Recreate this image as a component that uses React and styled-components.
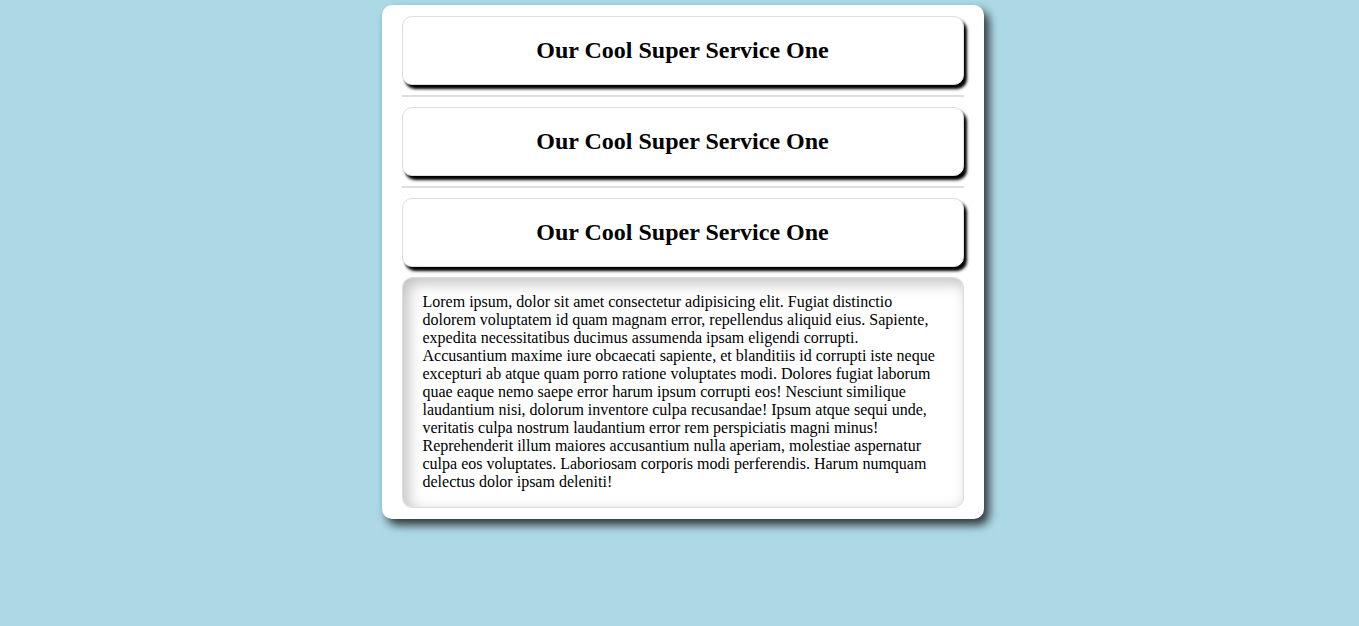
import React from "react";
import styled, { createGlobalStyle } from "styled-components";

const GlobalStyle = createGlobalStyle`
  body {
    margin: 0;
    background: #add8e6;
    font-family: "Liberation Serif", "Times New Roman", serif;
  }
`;

const lorem =
  "Lorem ipsum, dolor sit amet consectetur adipisicing elit. Fugiat distinctio dolorem voluptatem id quam magnam error, repellendus aliquid eius. Sapiente, expedita necessitatibus ducimus assumenda ipsam eligendi corrupti. Accusantium maxime iure obcaecati sapiente, et blanditiis id corrupti iste neque excepturi ab atque quam porro ratione voluptates modi. Dolores fugiat laborum quae eaque nemo saepe error harum ipsum corrupti eos! Nesciunt similique laudantium nisi, dolorum inventore culpa recusandae! Ipsum atque sequi unde, veritatis culpa nostrum laudantium error rem perspiciatis magni minus! Reprehenderit illum maiores accusantium nulla aperiam, molestiae aspernatur culpa eos voluptates. Laboriosam corporis modi perferendis. Harum numquam delectus dolor ipsam deleniti!";

const services = [
  { id: 1, title: "Our Cool Super Service One", open: false },
  { id: 2, title: "Our Cool Super Service One", open: false },
  { id: 3, title: "Our Cool Super Service One", open: true },
];

const App = () => {
  return (
    <Page>
      <GlobalStyle />
      <Accordion>
        {services.map((s) => (
          <Item key={s.id} open={s.open}>
            <Header>
              <Title>{s.title}</Title>
            </Header>
            {s.open && <Content>{lorem}</Content>}
          </Item>
        ))}
      </Accordion>
    </Page>
  );
};

export default App;

const Page = styled.div`
  display: flex;
  justify-content: center;
  padding: 5px 0 0 6px;
  min-height: 100vh;
  box-sizing: border-box;
`;

const Accordion = styled.div`
  width: 602px;
  box-sizing: border-box;
  align-self: flex-start;
  background: #fff;
  border-radius: 10px;
  padding: 11px 20px;
  box-shadow: 5px 6px 10px rgba(0, 0, 0, 0.75);
`;

const Item = styled.div`
  padding-bottom: ${(p) => (p.open ? "0" : "10px")};
  margin-bottom: ${(p) => (p.open ? "0" : "10px")};
  border-bottom: ${(p) => (p.open ? "none" : "2px solid #ddd")};
`;

const Header = styled.div`
  border: 1px solid #ddd;
  border-radius: 10px;
  background: #fff;
  padding: 20px;
  text-align: center;
  box-shadow: 3px 4px 3px #000;
`;

const Title = styled.h2`
  margin: 0;
  font-size: 24px;
  font-weight: bold;
  color: #000;
`;

const Content = styled.div`
  margin-top: 10px;
  border: 1px solid #ddd;
  border-radius: 10px;
  padding: 15px 20px 16px;
  font-size: 16px;
  color: #000;
  box-shadow: inset 5px 5px 15px rgba(0, 0, 0, 0.25);
`;
